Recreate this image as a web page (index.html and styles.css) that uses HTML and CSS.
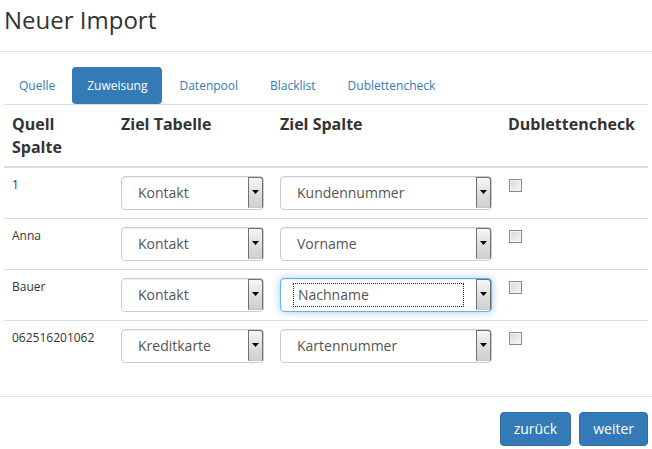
FILE: index.html
```html
<!DOCTYPE html>
<html lang="de">
<head>
<meta charset="utf-8">
<title>Neuer Import</title>
<link rel="stylesheet" href="styles.css">
</head>
<body>
<div class="modal">
  <div class="modal-header">
    <h4 class="modal-title">Neuer Import</h4>
  </div>
  <div class="modal-body">
    <ul class="nav">
      <li><a class="pill">Quelle</a></li>
      <li><a class="pill active">Zuweisung</a></li>
      <li><a class="pill">Datenpool</a></li>
      <li><a class="pill">Blacklist</a></li>
      <li><a class="pill">Dublettencheck</a></li>
    </ul>
    <table class="tbl">
      <colgroup>
        <col class="c1"><col class="c2"><col class="c3"><col class="c4">
      </colgroup>
      <thead>
        <tr>
          <th>Quell Spalte</th>
          <th>Ziel Tabelle</th>
          <th>Ziel Spalte</th>
          <th>Dublettencheck</th>
        </tr>
      </thead>
      <tbody>
        <tr>
          <td>1</td>
          <td><div class="sel"><span class="sel-text">Kontakt</span><span class="sel-btn"><svg width="7" height="4" viewBox="0 0 7 4"><polygon points="0,0 7,0 3.5,4" fill="#000"/></svg></span></div></td>
          <td><div class="sel"><span class="sel-text">Kundennummer</span><span class="sel-btn"><svg width="7" height="4" viewBox="0 0 7 4"><polygon points="0,0 7,0 3.5,4" fill="#000"/></svg></span></div></td>
          <td><span class="chk"></span></td>
        </tr>
        <tr>
          <td>Anna</td>
          <td><div class="sel"><span class="sel-text">Kontakt</span><span class="sel-btn"><svg width="7" height="4" viewBox="0 0 7 4"><polygon points="0,0 7,0 3.5,4" fill="#000"/></svg></span></div></td>
          <td><div class="sel"><span class="sel-text">Vorname</span><span class="sel-btn"><svg width="7" height="4" viewBox="0 0 7 4"><polygon points="0,0 7,0 3.5,4" fill="#000"/></svg></span></div></td>
          <td><span class="chk"></span></td>
        </tr>
        <tr>
          <td>Bauer</td>
          <td><div class="sel"><span class="sel-text">Kontakt</span><span class="sel-btn"><svg width="7" height="4" viewBox="0 0 7 4"><polygon points="0,0 7,0 3.5,4" fill="#000"/></svg></span></div></td>
          <td><div class="sel focus"><span class="sel-text">Nachname</span><span class="sel-btn"><svg width="7" height="4" viewBox="0 0 7 4"><polygon points="0,0 7,0 3.5,4" fill="#000"/></svg></span></div></td>
          <td><span class="chk"></span></td>
        </tr>
        <tr>
          <td>062516201062</td>
          <td><div class="sel"><span class="sel-text">Kreditkarte</span><span class="sel-btn"><svg width="7" height="4" viewBox="0 0 7 4"><polygon points="0,0 7,0 3.5,4" fill="#000"/></svg></span></div></td>
          <td><div class="sel"><span class="sel-text">Kartennummer</span><span class="sel-btn"><svg width="7" height="4" viewBox="0 0 7 4"><polygon points="0,0 7,0 3.5,4" fill="#000"/></svg></span></div></td>
          <td><span class="chk"></span></td>
        </tr>
      </tbody>
    </table>
  </div>
  <div class="modal-footer">
    <button class="btn">zurück</button>
    <button class="btn">weiter</button>
  </div>
</div>
</body>
</html>
```

FILE: styles.css
```css
html, body {
  margin: 0;
  padding: 0;
  background: #fff;
}
body {
  font-family: "Open Sans", "DejaVu Sans", sans-serif;
  font-size: 12px;
  line-height: 1.42857;
  color: #333;
}
.modal {
  width: 652px;
}
.modal-header {
  padding: 3px 4px 14px 4px;
  border-bottom: 1px solid #e5e5e5;
}
.modal-title {
  margin: 0;
  font-size: 24px;
  font-weight: 400;
  line-height: 34px;
  color: #333;
}
.modal-body {
  padding: 15px 4px 25px 4px;
}
.nav {
  list-style: none;
  margin: 0;
  padding: 0;
  display: flex;
  border-bottom: 1px solid #ddd;
}
.nav li + li {
  margin-left: 2px;
}
.pill {
  display: block;
  padding: 10px 15px;
  font-size: 12px;
  line-height: 17px;
  color: #337ab7;
  border-radius: 4px 4px 0 0;
}
.pill.active {
  background: #337ab7;
  color: #fff;
  border-radius: 4px;
}
.tbl {
  width: 644px;
  border-collapse: collapse;
  table-layout: fixed;
}
.c1 { width: 109px; }
.c2 { width: 159px; }
.c3 { width: 228px; }
.c4 { width: 148px; }
.tbl th {
  text-align: left;
  vertical-align: top;
  padding: 8px 8px 7px 8px;
  font-size: 16px;
  font-weight: 700;
  line-height: 1.42857;
  color: #333;
  border-bottom: 2px solid #ddd;
}
.tbl td {
  vertical-align: top;
  padding: 8px;
  font-size: 12px;
  line-height: 17px;
  border-top: 1px solid #ddd;
}
.tbl tbody tr:first-child td {
  border-top: 0;
}
.sel {
  display: flex;
  align-items: center;
  box-sizing: border-box;
  height: 34px;
  padding-left: 12px;
  border: 1px solid #ccc;
  border-radius: 4px;
  background: #fff;
  box-shadow: inset 0 1px 1px rgba(0, 0, 0, .075);
  font-size: 14px;
  color: #555;
}
.sel-text {
  flex: 1;
  height: 22px;
  line-height: 22px;
  padding-left: 4px;
  margin-right: 12px;
  white-space: nowrap;
}
.sel.focus {
  border-color: #66afe9;
  box-shadow: inset 0 1px 1px rgba(0, 0, 0, .075), 0 0 8px rgba(102, 175, 233, .6);
}
.sel.focus .sel-text {
  outline: 1px dotted #222;
  margin-left: 1px;
  margin-right: 13px;
  color: #555;
}
.sel-btn {
  align-self: stretch;
  box-sizing: border-box;
  width: 15px;
  margin: 0 0 1px 0;
  display: flex;
  align-items: center;
  justify-content: center;
  border: 1px solid #707070;
  border-bottom-color: #c8c8c8;
  border-radius: 0 3px 0 0;
  background: linear-gradient(#f6f6f6, #dcdcdc 60%, #cfcfcf);
}
.chk {
  display: block;
  box-sizing: border-box;
  width: 13px;
  height: 13px;
  margin: 3px 0 0 1px;
  border: 1px solid #8a8a8a;
  background: linear-gradient(135deg, #d8d8d8, #f6f6f6);
  box-shadow: inset 0 0 0 1px #f2f2f2;
}
.modal-footer {
  border-top: 1px solid #e5e5e5;
  padding: 15px 4px 15px 4px;
  display: flex;
  justify-content: flex-end;
  gap: 8px;
}
.btn {
  font-family: "Open Sans", "DejaVu Sans", sans-serif;
  font-size: 14px;
  line-height: 20px;
  padding: 6px 13px;
  color: #fff;
  background: #337ab7;
  border: 1px solid #2e6da4;
  border-radius: 4px;
  cursor: pointer;
}
```
